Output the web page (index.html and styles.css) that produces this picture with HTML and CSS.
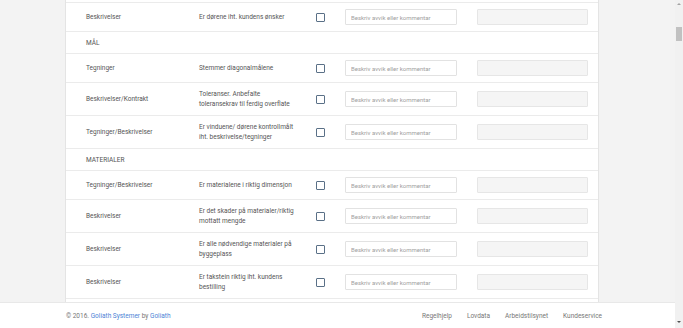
FILE: index.html
```html
<!DOCTYPE html>
<html lang="no">
<head>
    <meta charset="UTF-8">
    <meta name="viewport" content="width=device-width, initial-scale=1.0">
    <title>Sjekkliste</title>
    <link rel="stylesheet" href="styles.css">
</head>
<body>
    <div class="page">
        <div class="main">
            <div class="content">
                <div class="checklist">
                    <div class="row-cut"></div>

                    <div class="check-row">
                        <div class="source">Beskrivelser</div>
                        <div class="question">Er dørene iht. kundens ønsker</div>
                        <div><span class="checkbox"></span></div>
                        <div><input class="comment" type="text" placeholder="Beskriv avvik eller kommentar"></div>
                        <div><input class="comment" type="text" disabled></div>
                    </div>

                    <div class="group-row">MÅL</div>

                    <div class="check-row">
                        <div class="source">Tegninger</div>
                        <div class="question">Stemmer diagonalmålene</div>
                        <div><span class="checkbox"></span></div>
                        <div><input class="comment" type="text" placeholder="Beskriv avvik eller kommentar"></div>
                        <div><input class="comment" type="text" disabled></div>
                    </div>

                    <div class="check-row">
                        <div class="source">Beskrivelser/Kontrakt</div>
                        <div class="question">Toleranser. Anbefalte toleransekrav til ferdig overflate</div>
                        <div><span class="checkbox"></span></div>
                        <div><input class="comment" type="text" placeholder="Beskriv avvik eller kommentar"></div>
                        <div><input class="comment" type="text" disabled></div>
                    </div>

                    <div class="check-row">
                        <div class="source">Tegninger/Beskrivelser</div>
                        <div class="question">Er vinduene/ dørene kontrollmålt iht. beskrivelse/tegninger</div>
                        <div><span class="checkbox"></span></div>
                        <div><input class="comment" type="text" placeholder="Beskriv avvik eller kommentar"></div>
                        <div><input class="comment" type="text" disabled></div>
                    </div>

                    <div class="group-row">MATERIALER</div>

                    <div class="check-row">
                        <div class="source">Tegninger/Beskrivelser</div>
                        <div class="question">Er materialene i riktig dimensjon</div>
                        <div><span class="checkbox"></span></div>
                        <div><input class="comment" type="text" placeholder="Beskriv avvik eller kommentar"></div>
                        <div><input class="comment" type="text" disabled></div>
                    </div>

                    <div class="check-row">
                        <div class="source">Beskrivelser</div>
                        <div class="question">Er det skader på materialer/riktig mottatt mengde</div>
                        <div><span class="checkbox"></span></div>
                        <div><input class="comment" type="text" placeholder="Beskriv avvik eller kommentar"></div>
                        <div><input class="comment" type="text" disabled></div>
                    </div>

                    <div class="check-row">
                        <div class="source">Beskrivelser</div>
                        <div class="question">Er alle nødvendige materialer på byggeplass</div>
                        <div><span class="checkbox"></span></div>
                        <div><input class="comment" type="text" placeholder="Beskriv avvik eller kommentar"></div>
                        <div><input class="comment" type="text" disabled></div>
                    </div>

                    <div class="check-row">
                        <div class="source">Beskrivelser</div>
                        <div class="question">Er takstein riktig iht. kundens bestilling</div>
                        <div><span class="checkbox"></span></div>
                        <div><input class="comment" type="text" placeholder="Beskriv avvik eller kommentar"></div>
                        <div><input class="comment" type="text" disabled></div>
                    </div>

                    <div class="row-tail"></div>
                </div>
            </div>

            <div class="footer">
                <div class="copyright">
                    © 2016. <a href="#">Goliath Systemer</a> by <a href="#">Goliath</a>
                </div>
                <div class="footer-links">
                    <a href="#">Regelhjelp</a>
                    <a href="#">Lovdata</a>
                    <a href="#">Arbeidstilsynet</a>
                    <a href="#">Kundeservice</a>
                </div>
            </div>
        </div>

        <div class="scrollbar">
            <span class="arrow up"></span>
            <span class="thumb"></span>
            <span class="arrow down"></span>
        </div>
    </div>
</body>
</html>
```

FILE: styles.css
```css
html, body {
    margin: 0;
    height: 100%;
    overflow: hidden;
}
body {
    font-family: Roboto, 'Open Sans', sans-serif;
    font-size: 6.5px;
    color: #555;
    background-color: #f3f3f3;
}
.page {
    display: flex;
    height: 100vh;
}
.main {
    flex: 1;
    display: flex;
    flex-direction: column;
    min-width: 0;
}
.content {
    flex: 1;
    overflow: hidden;
    padding-left: 65px;
}
.checklist {
    width: 532px;
    background-color: white;
    border-left: 1px solid #e4e4e4;
    border-right: 1px solid #e4e4e4;
}
.row-cut {
    height: 2px;
    border-bottom: 1px solid #ebebeb;
}
.row-tail {
    height: 30px;
}
.check-row {
    display: grid;
    grid-template-columns: 113px 117px 29px 132px 111px;
    align-items: center;
    padding: 6px 0 6px 20px;
    border-bottom: 1px solid #ebebeb;
    line-height: 10px;
}
.question {
    padding-right: 20px;
}
.group-row {
    padding: 6px 0 5px 20px;
    line-height: 10px;
    border-bottom: 1px solid #ebebeb;
    text-transform: uppercase;
}
.checkbox {
    display: block;
    width: 7px;
    height: 7px;
    border: 1px solid #5a7087;
    border-radius: 1px;
}
.comment {
    display: block;
    box-sizing: border-box;
    width: 112px;
    height: 16px;
    margin: 0;
    padding: 0 5px;
    border: 1px solid #e2e2e2;
    border-radius: 1px;
    background-color: white;
    font-family: Roboto, 'Open Sans', sans-serif;
    font-size: 6px;
    color: #555;
    outline: none;
}
.comment::placeholder {
    color: #a0a0a0;
}
.comment:disabled {
    width: 111px;
    background-color: #f5f5f5;
    border-color: #e6e6e6;
}
.footer {
    height: 25px;
    background-color: white;
    border-top: 1px solid #e8e8e8;
    display: flex;
    align-items: center;
    justify-content: space-between;
    padding: 0 73px 0 66px;
    color: #777;
}
.footer a {
    color: #4d84d6;
    text-decoration: none;
}
.footer-links {
    display: flex;
    gap: 15px;
}
.footer-links a {
    color: #777;
}
.scrollbar {
    width: 8px;
    background-color: #f1f1f1;
    display: flex;
    flex-direction: column;
    align-items: center;
}
.arrow {
    width: 0;
    height: 0;
    border-left: 2px solid transparent;
    border-right: 2px solid transparent;
}
.arrow.up {
    margin-top: 3px;
    border-bottom: 2px solid #a3a3a3;
}
.arrow.down {
    margin-top: auto;
    margin-bottom: 5px;
    border-top: 2px solid #505050;
}
.thumb {
    width: 6px;
    height: 14px;
    margin-top: 22px;
    background-color: #c1c1c1;
}
```
